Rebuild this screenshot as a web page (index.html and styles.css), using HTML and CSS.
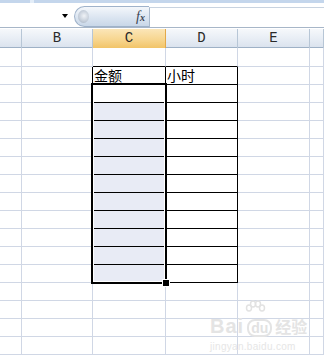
FILE: index.html
```html
<!DOCTYPE html>
<html>
<head>
<meta charset="utf-8">
<link rel="stylesheet" href="styles.css">
</head>
<body>
<div class="strip"><span class="strip-gap"></span></div>
<div class="fbar">
  <div class="namebox"><span class="arrow"></span></div>
  <div class="fxbtn"><span class="knob"></span><span class="fx">f<span class="fxx">x</span></span></div>
  <div class="finput"></div>
</div>
<div class="sheet">
  <div class="row hdr">
    <div class="h"></div><div class="h">B</div><div class="h sel">C</div><div class="h">D</div><div class="h">E</div><div class="h"></div>
  </div>
  <div class="row first">
    <div class="c"></div><div class="c"></div><div class="c bb"></div><div class="c bb"></div><div class="c"></div><div class="c"></div>
  </div>
  <div class="row">
    <div class="c"></div><div class="c br"></div><div class="c bb br t">金额</div><div class="c bb br t">小时</div><div class="c"></div><div class="c"></div>
  </div>
  <div class="row">
    <div class="c"></div><div class="c br"></div><div class="c bb br"></div><div class="c bb br"></div><div class="c"></div><div class="c"></div>
  </div>
  <div class="row">
    <div class="c"></div><div class="c br"></div><div class="c bb br f"></div><div class="c bb br"></div><div class="c"></div><div class="c"></div>
  </div>
  <div class="row">
    <div class="c"></div><div class="c br"></div><div class="c bb br f"></div><div class="c bb br"></div><div class="c"></div><div class="c"></div>
  </div>
  <div class="row">
    <div class="c"></div><div class="c br"></div><div class="c bb br f"></div><div class="c bb br"></div><div class="c"></div><div class="c"></div>
  </div>
  <div class="row">
    <div class="c"></div><div class="c br"></div><div class="c bb br f"></div><div class="c bb br"></div><div class="c"></div><div class="c"></div>
  </div>
  <div class="row">
    <div class="c"></div><div class="c br"></div><div class="c bb br f"></div><div class="c bb br"></div><div class="c"></div><div class="c"></div>
  </div>
  <div class="row">
    <div class="c"></div><div class="c br"></div><div class="c bb br f"></div><div class="c bb br"></div><div class="c"></div><div class="c"></div>
  </div>
  <div class="row">
    <div class="c"></div><div class="c br"></div><div class="c bb br f"></div><div class="c bb br"></div><div class="c"></div><div class="c"></div>
  </div>
  <div class="row">
    <div class="c"></div><div class="c br"></div><div class="c bb br f"></div><div class="c bb br"></div><div class="c"></div><div class="c"></div>
  </div>
  <div class="row">
    <div class="c"></div><div class="c br"></div><div class="c bb br f"></div><div class="c bb br"></div><div class="c"></div><div class="c"></div>
  </div>
  <div class="row">
    <div class="c"></div><div class="c br"></div><div class="c bb br f"></div><div class="c bb br"></div><div class="c"></div><div class="c"></div>
  </div>
  <div class="row">
    <div class="c"></div><div class="c"></div><div class="c"></div><div class="c"></div><div class="c"></div><div class="c"></div>
  </div>
  <div class="row">
    <div class="c"></div><div class="c"></div><div class="c"></div><div class="c"></div><div class="c"></div><div class="c"></div>
  </div>
  <div class="row">
    <div class="c"></div><div class="c"></div><div class="c"></div><div class="c"></div><div class="c"></div><div class="c"></div>
  </div>
  <div class="row">
    <div class="c"></div><div class="c"></div><div class="c"></div><div class="c"></div><div class="c"></div><div class="c"></div>
  </div>
  <div class="selbox"></div>
  <div class="handle"></div>
  <div class="wm">
    <svg class="paw" width="22" height="14" viewBox="0 0 22 14">
      <g fill="none" stroke="#e2e2e2" stroke-width="1.5">
        <ellipse cx="5" cy="8" rx="2.5" ry="3"/>
        <ellipse cx="9" cy="4" rx="2.5" ry="3"/>
        <ellipse cx="14" cy="4" rx="2.5" ry="3"/>
        <ellipse cx="18" cy="8" rx="2.5" ry="3"/>
      </g>
    </svg>
    <div class="wm-top"><span class="wm-bai">Bai</span><span class="wm-du">du</span><span class="wm-jy">经验</span></div>
    <div class="wm-url">jingyan.baidu.com</div>
  </div>
</div>
</body>
</html>
```
FILE: styles.css
```css
* { box-sizing: border-box; }
html, body { margin: 0; padding: 0; }
body {
  width: 324px;
  height: 361px;
  overflow: hidden;
  background: #fff;
  font-family: "Liberation Serif", serif;
}
.strip {
  height: 3px;
  background: #c4d6ec;
  position: relative;
}
.strip-gap {
  display: block;
  margin-left: 30px;
  width: 4px;
  height: 3px;
  background: #e3edf8;
}
.fbar {
  display: flex;
  height: 25px;
  border-bottom: 1px solid #a7b6c8;
  background: #fff;
}
.namebox {
  width: 74px;
  display: flex;
  align-items: center;
  justify-content: flex-end;
  padding-right: 6px;
  padding-top: 2px;
}
.arrow {
  width: 0;
  height: 0;
  border-left: 3.5px solid transparent;
  border-right: 3.5px solid transparent;
  border-top: 4px solid #000;
}
.fxbtn {
  margin-top: 3px;
  width: 75px;
  height: 21px;
  border: 1px solid #9fb2ca;
  border-right: none;
  border-radius: 11px 0 0 11px;
  background: linear-gradient(#f4f7fb, #dbe5f1 55%, #c9d7e8);
  display: flex;
  align-items: center;
  justify-content: space-between;
  padding: 0 4px 0 3px;
}
.knob {
  width: 11px;
  height: 13px;
  border-radius: 50%;
  background: radial-gradient(circle at 55% 45%, #f0f3f7 0, #c3ccd8 60%, #9aa8ba 100%);
}
.fx {
  font-family: "Liberation Serif", serif;
  font-style: italic;
  font-size: 14px;
  color: #3a4452;
  line-height: 1;
}
.fxx {
  font-size: 10px;
  font-weight: bold;
}
.finput {
  flex: 1;
  margin-top: 4px;
  border-left: 1px solid #a9b9cc;
  border-top: 1px solid #c8d3e0;
  background: #fff;
}
.sheet {
  position: relative;
}
.row {
  display: grid;
  grid-template-columns: 22px 71px 73px 72px 72px 1fr;
  height: 18px;
}
.row.first { height: 19px; }
.hdr {
  height: 20px;
  border-top: 1px solid #fff;
  background: linear-gradient(#f6f8fb, #e6ecf4 60%, #dbe3ee);
  border-bottom: 1px solid #9eb1c6;
}
.h {
  border-right: 1px solid #b7c6d6;
  text-align: center;
  font-size: 14px;
  line-height: 19px;
  color: #2a2a2a;
  font-family: "Liberation Mono", monospace;
}
.h.sel {
  background: linear-gradient(#fbe6b8, #f7d690 55%, #f2c468);
  border-right: 1px solid #e3a94a;
}
.c {
  border-right: 1px solid #d0d7e5;
  border-bottom: 1px solid #d0d7e5;
}
.bb { border-bottom-color: #000; }
.br { border-right-color: #000; }
.f { background: #e8ebf5; }
.t {
  font-family: "Noto Sans CJK SC", sans-serif;
  font-size: 14px;
  line-height: 17px;
  color: #000;
  padding-left: 1px;
  white-space: nowrap;
}
.selbox {
  position: absolute;
  left: 91px;
  top: 55px;
  width: 76px;
  height: 201px;
  border: 2px solid #000;
  box-shadow: inset 0 0 0 1px #fff;
  pointer-events: none;
}
.handle {
  position: absolute;
  left: 163px;
  top: 252px;
  width: 6px;
  height: 6px;
  background: #000;
  outline: 1px solid #fff;
}
.wm {
  position: absolute;
  left: 210px;
  top: 272px;
  width: 100px;
  color: #e2e2e2;
  font-family: "Liberation Sans", sans-serif;
}
.paw {
  display: block;
  margin-left: 34px;
}
.wm-top {
  display: flex;
  align-items: baseline;
  gap: 3px;
}
.wm-bai {
  font-size: 20px;
  font-weight: bold;
  letter-spacing: 1px;
  color: #e4e4e4;
}
.wm-du {
  font-size: 14px;
  font-weight: bold;
  border: 2px solid #e4e4e4;
  border-radius: 8px;
  padding: 0 2px;
  line-height: 14px;
}
.wm-jy {
  font-family: "Noto Sans CJK SC", sans-serif;
  font-size: 16px;
  font-weight: bold;
  color: #e4e4e4;
}
.wm-url {
  font-size: 10px;
  color: #e6e6e6;
  margin-top: 3px;
  letter-spacing: 0.3px;
}
```
